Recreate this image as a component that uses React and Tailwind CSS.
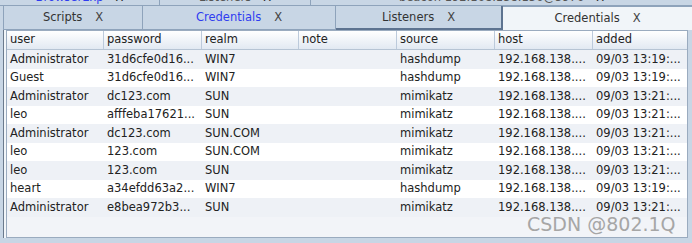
import React from 'react'

const cols = ['user', 'password', 'realm', 'note', 'source', 'host', 'added']

const rows = [
  ['Administrator', '31d6cfe0d16...', 'WIN7', '', 'hashdump', '192.168.138....', '09/03 13:19:...'],
  ['Guest', '31d6cfe0d16...', 'WIN7', '', 'hashdump', '192.168.138....', '09/03 13:19:...'],
  ['Administrator', 'dc123.com', 'SUN', '', 'mimikatz', '192.168.138....', '09/03 13:21:...'],
  ['leo', 'afffeba17621...', 'SUN', '', 'mimikatz', '192.168.138....', '09/03 13:21:...'],
  ['Administrator', 'dc123.com', 'SUN.COM', '', 'mimikatz', '192.168.138....', '09/03 13:21:...'],
  ['leo', '123.com', 'SUN.COM', '', 'mimikatz', '192.168.138....', '09/03 13:21:...'],
  ['leo', '123.com', 'SUN', '', 'mimikatz', '192.168.138....', '09/03 13:21:...'],
  ['heart', 'a34efdd63a2...', 'WIN7', '', 'hashdump', '192.168.138....', '09/03 13:19:...'],
  ['Administrator', 'e8bea972b3...', 'SUN', '', 'mimikatz', '192.168.138....', '09/03 13:21:...'],
]

const grid = 'grid grid-cols-[97px_98px_97px_98px_98px_98px_1fr]'

function Tab({ label, blue, className }) {
  return (
    <div className={`flex items-center justify-center gap-[13px] ${className}`}>
      <span className={blue ? 'text-[#2f3cf0]' : 'text-[#333]'}>{label}</span>
      <span className="text-[#444]">X</span>
    </div>
  )
}

export default function App() {
  return (
    <div className="relative w-[692px] h-[243px] overflow-hidden bg-[#c8d6e5] text-[11.5px] text-[#222] font-['DejaVu_Sans',sans-serif]">
      {/* clipped tab row above */}
      <div className="flex h-[6px] overflow-hidden border-b border-[#8ea3bb]">
        <div className="w-[160px] flex items-end justify-center gap-3 border-r border-[#8ea3bb] leading-[14px]">
          <span className="text-[#2f3cf0] mb-[1px]">BrowserExp</span>
          <span className="mb-[1px]">X</span>
        </div>
        <div className="w-[151px] flex items-end justify-center gap-3 border-r border-[#8ea3bb] leading-[14px]">
          <span className="mb-[1px] text-[#555]">Listeners</span>
          <span className="mb-[1px]">X</span>
        </div>
        <div className="flex-1 flex items-end justify-center gap-3 leading-[14px]">
          <span className="mb-[1px] text-[#555]">beacon 192.168.138.136@5976</span>
          <span className="mb-[1px]">X</span>
        </div>
      </div>

      {/* tab row */}
      <div className="flex h-[24px] pl-[3px]">
        <Tab label="Scripts" className="w-[140px] border-l border-r border-b border-[#8ea3bb]" />
        <Tab label="Credentials" blue className="w-[193px] border-r border-b border-[#8ea3bb]" />
        <Tab label="Listeners" className="w-[167px] border-r-2 border-b-2 border-[#5d7390] pt-[1px]" />
        <Tab label="Credentials" className="flex-1 bg-[#f1f5f9] border-t border-[#8ea3bb]" />
      </div>

      {/* table panel */}
      <div className="ml-[3px] mr-[4px] h-[208px] border-l border-[#6b7a8c] bg-[#f1f5f9] pl-[2px]">
        <div className="h-full border border-[#9aabbf] bg-[#f2f4f8] flex flex-col">
          <div className={`${grid} h-[19px] bg-gradient-to-b from-[#ffffff] to-[#e2e9f2] border-b border-[#b6c4d4]`}>
            {cols.map((c, i) => (
              <div key={c} className={`pl-[3px] flex items-center ${i < cols.length - 1 ? 'border-r border-[#bccadb]' : ''}`}>{c}</div>
            ))}
          </div>
          {rows.map((r, i) => (
            <div key={i} className={`${grid} h-[18.5px] ${i % 2 === 0 ? 'bg-[#eef1f6]' : 'bg-[#ffffff]'}`}>
              {r.map((v, j) => (
                <div key={j} className="pl-[3px] flex items-center whitespace-nowrap overflow-hidden">{v}</div>
              ))}
            </div>
          ))}
        </div>
      </div>

      <div className="absolute left-[527px] top-[214px] text-[19px] leading-[20px] text-[#a6a6a6] font-['DejaVu_Sans',sans-serif]">CSDN @802.1Q</div>
    </div>
  )
}
